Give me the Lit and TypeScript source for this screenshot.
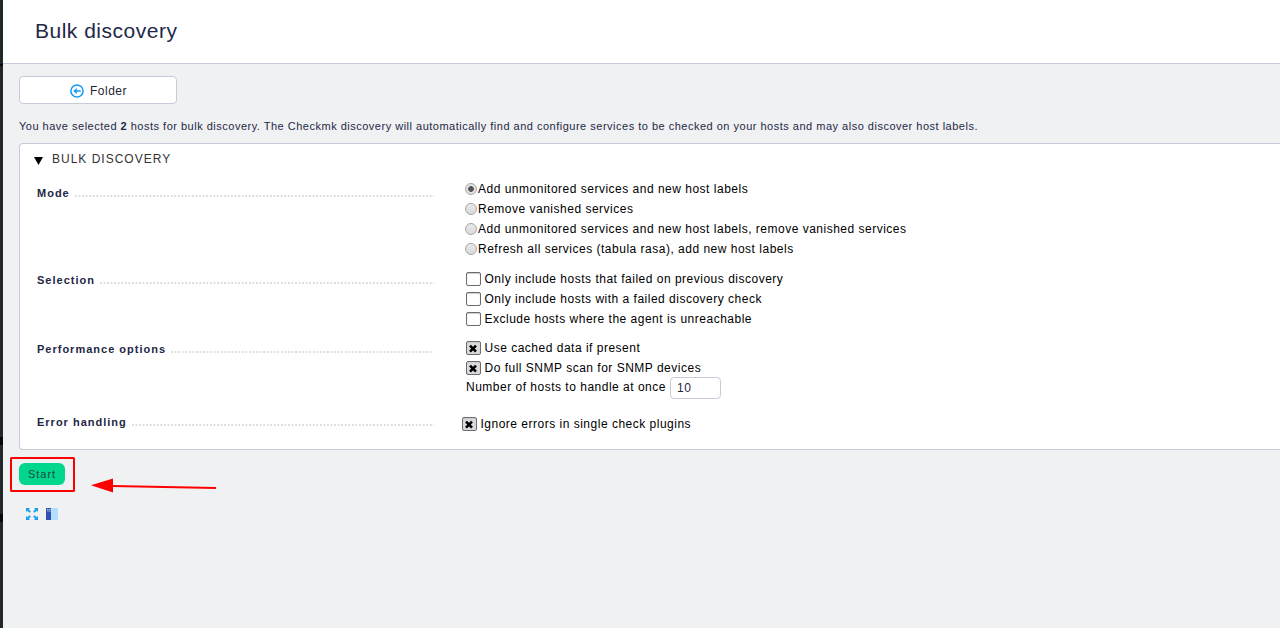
import { LitElement, html, css } from "lit";
import { customElement, property } from "lit/decorators.js";

@customElement("form-row")
class FormRow extends LitElement {
  static styles = css`
    :host { display: flex; align-items: flex-start; }
    .legend { display: flex; width: 397px; height: 16px; margin-left: 17px; font-size: 11px; font-weight: bold; letter-spacing: 1px; line-height: 16px; color: #1e2846; white-space: nowrap; }
    .dots { flex: 1; margin-left: 5px; height: 12px; align-self: flex-start;
      background: linear-gradient(90deg, #dcdcdc 2px, transparent 2px) 0 10px / 3.55px 2px repeat-x; }
    .content { display: block; }
  `;
  @property() label = "";
  render() {
    return html`<div class="legend">${this.label}<span class="dots"></span></div><div class="content"><slot></slot></div>`;
  }
}

@customElement("app-root")
class AppRoot extends LitElement {
  static styles = css`
    :host { display: flex; position: relative; width: 100%; height: 628px; overflow: hidden; background: #f0f1f3; font: 12px "Liberation Sans", Arial, sans-serif; letter-spacing: 0.5px; color: #000; }
    * { box-sizing: border-box; }
    .edge { width: 3px; flex: none; background: linear-gradient(#07090a, #07090a) 0 437px / 3px 8px no-repeat, linear-gradient(#07090a, #07090a) 0 514px / 3px 8px no-repeat, linear-gradient(#07090a, #07090a) 0 64px / 3px 2px no-repeat, #212829; }
    .main { flex: 1; min-width: 0; }
    .head { height: 64px; background: #fff; border-bottom: 1px solid #c8cad9; padding: 18px 0 0 32px; font-size: 21px; line-height: 26px; color: #1e2846; }
    .body { padding-left: 16px; }
    .folder { display: flex; align-items: center; gap: 6px; width: 158px; height: 28px; margin-top: 12px; padding: 2px 0 0 50px; border: 1px solid #c8cad9; border-radius: 4px; background: #fff; color: #1e2832; }
    .folder svg { display: block; }
    .intro { margin-top: 14px; height: 16px; line-height: 16px; font-size: 11px; color: #1e2846; white-space: nowrap; }
    .panel { margin-top: 9px; height: 307px; border: 1px solid #c8cad9; border-right: 0; border-radius: 4px 0 0 4px; background: #fff; }
    .title { display: flex; height: 30px; padding: 7px 0 0 14px; gap: 9px; line-height: 16px; letter-spacing: 1px; color: #333; }
    .title svg { margin-top: 6px; }
    .mode { height: 89px; padding-top: 11px; }
    .sel { height: 69px; padding-top: 9px; }
    .perf { height: 73px; padding-top: 9px; }
    .err { padding-top: 9px; }
    .list { margin-left: 31px; white-space: nowrap; }
    .mode .list { margin-top: -6px; }
    .sel .list, .perf .list { margin: -3px 0 0 32px; }
    .err .list { margin: 0 0 0 28px; }
    .opt { display: flex; height: 20px; line-height: 20px; align-items: center; }
    .radio { width: 12px; height: 12px; flex: none; margin-right: 1px; border: 1px solid #a8a8a8; border-radius: 50%; background: linear-gradient(#e9e9e9, #d9d9d9); }
    .on { background: radial-gradient(circle, #555 2.5px, transparent 3.2px), #e2e2e2; }
    .box { width: 15px; height: 14px; flex: none; margin-right: 3.5px; border: 1px solid #6a6a70; border-radius: 2px; background: #fff; box-shadow: inset 0 1px 1px #ccc; }
    .checked { background: #dadadd; }
    .box svg { display: block; }
    .num { display: flex; height: 22px; line-height: 20px; margin-top: -1px; }
    .input { width: 51px; height: 22px; margin-left: 4px; padding-left: 6px; border: 1px solid #c8cad9; border-radius: 4px; line-height: 20px; color: #1e2846; }
    .start { display: block; width: 46px; height: 22px; margin-top: 13px; padding: 0; border: 0; border-radius: 6px; background: #00d68c; font: 11px "Liberation Sans", Arial, sans-serif; letter-spacing: 1px; color: #214a40; text-align: center; line-height: 22px; }
    .foot { display: flex; gap: 8px; margin: 23px 0 0 7px; }
    .marks { position: absolute; left: 0; top: 450px; }
  `;

  radio(label: string, on = false) {
    return html`<div class="opt"><span class="radio ${on ? "on" : ""}"></span>${label}</div>`;
  }

  check(label: string, on = false) {
    return html`<div class="opt"><span class="box ${on ? "checked" : ""}">${on
      ? html`<svg width="13" height="12" viewBox="0 0 13 12"><path d="M3 3.6L9 9.6M9 3.6L3 9.6" stroke="#000" stroke-width="2.6"/></svg>`
      : ""}</span>${label}</div>`;
  }

  render() {
    return html`
      <div class="edge"></div>
      <div class="main">
        <div class="head">Bulk discovery</div>
        <div class="body">
          <div class="folder">
            <svg width="14" height="14" viewBox="0 0 14 14"><circle cx="7" cy="7" r="6.1" fill="none" stroke="#159cf5" stroke-width="1.5"/><path d="M3.2 7L6.7 4V6.2H10.8V7.8H6.7V10Z" fill="#159cf5"/></svg>
            <span>Folder</span>
          </div>
          <div class="intro">You have selected <b>2</b> hosts for bulk discovery. The Checkmk discovery will automatically find and configure services to be checked on your hosts and may also discover host labels.</div>
          <div class="panel">
            <div class="title"><svg width="9" height="8" viewBox="0 0 9 8"><path d="M0 0H9L4.5 8Z" fill="#000"/></svg><span>BULK DISCOVERY</span></div>
            <form-row class="mode" label="Mode"><div class="list">
              ${this.radio("Add unmonitored services and new host labels", true)}
              ${this.radio("Remove vanished services")}
              ${this.radio("Add unmonitored services and new host labels, remove vanished services")}
              ${this.radio("Refresh all services (tabula rasa), add new host labels")}
            </div></form-row>
            <form-row class="sel" label="Selection"><div class="list">
              ${this.check("Only include hosts that failed on previous discovery")}
              ${this.check("Only include hosts with a failed discovery check")}
              ${this.check("Exclude hosts where the agent is unreachable")}
            </div></form-row>
            <form-row class="perf" label="Performance options"><div class="list">
              ${this.check("Use cached data if present", true)}
              ${this.check("Do full SNMP scan for SNMP devices", true)}
              <div class="num">Number of hosts to handle at once<span class="input">10</span></div>
            </div></form-row>
            <form-row class="err" label="Error handling"><div class="list">
              ${this.check("Ignore errors in single check plugins", true)}
            </div></form-row>
          </div>
          <button class="start">Start</button>
          <div class="foot">
            <svg width="12" height="12" viewBox="0 0 12 12" fill="#1a9ff0"><path d="M0 0H4L2.8 1.2L4.8 3.4L3.4 4.8L1.2 2.8L0 4Z"/><path d="M12 0V4L10.8 2.8L8.6 4.8L7.2 3.4L9.2 1.2L8 0Z"/><path d="M0 12V8L1.2 9.2L3.4 7.2L4.8 8.6L2.8 10.8L4 12Z"/><path d="M12 12H8L9.2 10.8L7.2 8.6L8.6 7.2L10.8 9.2L12 8Z"/></svg>
            <svg width="12" height="12" viewBox="0 0 12 12"><path d="M0 0H5V12H0Z" fill="#2f52b4"/><path d="M1 1H5V4H1Z" fill="#5f7dc8"/><path d="M1 1H2V2H1ZM3 1H4V2H3Z" fill="#c8c89a"/><path d="M5 0H12V12H5Z" fill="#b3dffc"/></svg>
          </div>
        </div>
      </div>
      <svg class="marks" width="230" height="50" viewBox="0 450 230 50"><rect x="11" y="458" width="63" height="33" rx="0.5" fill="none" stroke="#f00" stroke-width="2"/><path d="M112 486L216 488" stroke="#f00" stroke-width="2"/><path d="M91 485.3L113 478.5V492.5Z" fill="#f00"/></svg>
    `;
  }
}
